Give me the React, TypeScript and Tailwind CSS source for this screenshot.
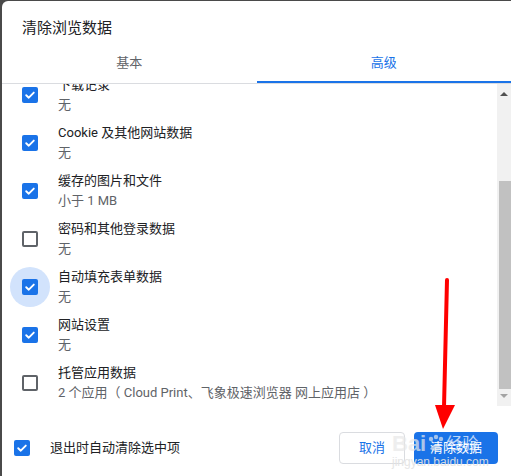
import React from "react";

const font = { fontFamily: 'Roboto, "Noto Sans CJK SC", sans-serif' };

function Check({ on }: { on: boolean }) {
  if (!on) {
    return <div className="w-[16px] h-[16px] rounded-[2px] border-2 border-[#5f6368] bg-white shrink-0" />;
  }
  return (
    <div className="w-[16px] h-[16px] rounded-[2px] bg-[#1a73e8] shrink-0 flex items-center justify-center">
      <svg width="12" height="12" viewBox="0 0 12 12">
        <path d="M2.2 6.2 L4.8 8.7 L9.8 3.6" fill="none" stroke="white" strokeWidth="1.9" strokeLinecap="round" strokeLinejoin="round" />
      </svg>
    </div>
  );
}

const items = [
  { label: "下载记录", sub: "无", on: true },
  { label: "Cookie 及其他网站数据", sub: "无", on: true },
  { label: "缓存的图片和文件", sub: "小于 1 MB", on: true },
  { label: "密码和其他登录数据", sub: "无", on: false },
  { label: "自动填充表单数据", sub: "无", on: true, focus: true },
  { label: "网站设置", sub: "无", on: true },
  { label: "托管应用数据", sub: "2 个应用（ Cloud Print、飞象极速浏览器 网上应用店 ）", on: false },
];

export default function App() {
  return (
    <div className="relative w-[511px] h-[476px] bg-[#4a4a4a] pl-[2px] pt-[1px] overflow-hidden" style={font}>
      <div className="w-full h-full bg-white rounded-tl-[6px] flex flex-col">
        <div className="pl-[20px] pt-[17px] h-[42px] text-[15px] leading-[20px] text-[#202124]">清除浏览数据</div>
        <div className="flex h-[41px] border-b border-[#dadce0] text-[13px]">
          <div className="flex-1 flex items-center justify-center text-[#5f6368]">基本</div>
          <div className="flex-1 relative flex items-center justify-center text-[#1a73e8]">
            高级
            <div className="absolute left-0 right-0 bottom-0 h-[2px] bg-[#1a73e8]" />
          </div>
        </div>
        <div className="flex h-[322px]">
          <div className="flex-1 overflow-hidden">
            <div className="-mt-[9px] flex flex-col gap-[8px]">
              {items.map((it, i) => (
                <div key={i} className="flex items-center h-[40px]">
                  <div className="w-[60px] h-[40px] pl-[8px] flex items-center shrink-0">
                    <div className={"w-[40px] h-[40px] rounded-full flex items-center justify-center " + (it.focus ? "bg-[#d2e3fc]" : "")}>
                      <Check on={it.on} />
                    </div>
                  </div>
                  <div className="-ml-[4px] flex flex-col">
                    <div className="text-[13px] leading-[20px] text-[#202124]">{it.label}</div>
                    <div className="text-[13px] leading-[20px] text-[#5f6368]">{it.sub}</div>
                  </div>
                </div>
              ))}
            </div>
          </div>
          <div className="w-[14px] h-[322px] bg-[#f1f1f1] flex flex-col items-center">
            <div className="h-[20px] flex items-center justify-center">
              <div className="w-0 h-0 border-l-[4px] border-r-[4px] border-b-[4px] border-l-transparent border-r-transparent border-b-[#505050]" />
            </div>
            <div className="mt-[77px] w-[12px] ml-[2px] h-[208px] bg-[#c1c1c1]" />
            <div className="h-[14px] flex items-center justify-center">
              <div className="w-0 h-0 border-l-[4px] border-r-[4px] border-t-[4px] border-l-transparent border-r-transparent border-t-[#a3a3a3]" />
            </div>
          </div>
        </div>
        <div className="flex items-center pt-[26px] pl-[12px] pr-[13px]">
          <Check on={true} />
          <div className="ml-[20px] text-[13px] leading-[20px] text-[#202124]">退出时自动清除选中项</div>
          <div className="ml-auto flex gap-[9px]">
            <div className="w-[66px] h-[32px] rounded-[4px] border border-[#dadce0] flex items-center justify-center text-[13px] text-[#1a73e8]">取消</div>
            <div className="w-[84px] h-[32px] rounded-[4px] bg-[#1a73e8] flex items-center justify-center text-[13px] text-white">清除数据</div>
          </div>
        </div>
      </div>

      {/* watermark */}
      <div className="absolute left-[392px] top-[432px] flex flex-col items-start pointer-events-none">
        <div className="flex items-center h-[24px]">
          <span className="text-[22px] font-bold leading-[24px] text-[#e8e8e8] opacity-70" style={{ fontFamily: '"Liberation Sans", sans-serif' }}>Bai</span>
          <svg width="20" height="20" viewBox="0 0 20 20" className="opacity-70">
            <circle cx="5" cy="5" r="2.2" fill="#dfe6ee" />
            <circle cx="10" cy="3" r="2.2" fill="#dfe6ee" />
            <circle cx="15" cy="5" r="2.2" fill="#dfe6ee" />
            <path d="M4 15 Q10 6 16 15 Q10 19 4 15Z" fill="#dfe6ee" />
          </svg>
          <span className="text-[16px] leading-[20px] text-white opacity-70" style={font}>经验</span>
        </div>
        <div className="text-[12px] leading-[12px] text-[#e3e3e3] opacity-90" style={{ fontFamily: '"Liberation Sans", sans-serif' }}>jingyan.baidu.com</div>
      </div>

      {/* red arrow annotation */}
      <svg className="absolute left-0 top-0 pointer-events-none" width="511" height="476" viewBox="0 0 511 476">
        <path d="M447 280 L444 407" stroke="#ff0000" strokeWidth="4" strokeLinecap="round" />
        <path d="M435 405 L455 405 L443 429 Z" fill="#ff0000" />
      </svg>
    </div>
  );
}
